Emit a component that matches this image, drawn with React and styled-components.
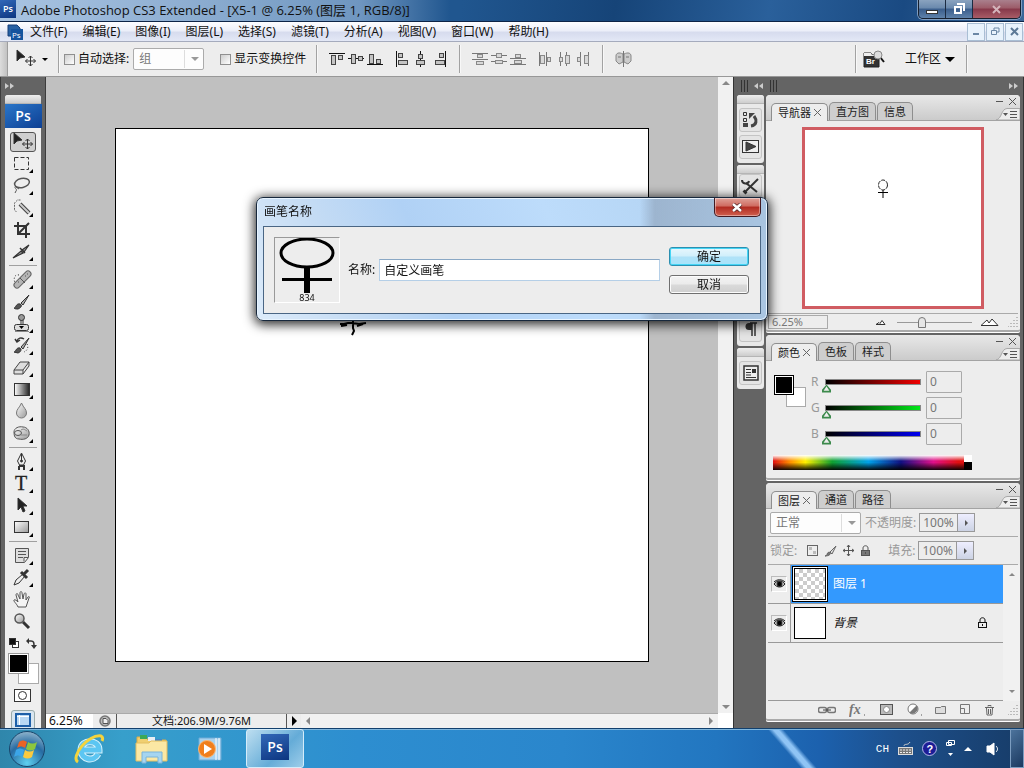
import React from 'react';
import styled, { createGlobalStyle } from 'styled-components';

const GlobalStyle = createGlobalStyle`
  * { box-sizing: border-box; }
  html, body, #root { height: 100%; }
  body {
    margin: 0;
    overflow: hidden;
    font: 12px/16px "Noto Sans", "Noto Sans CJK SC", sans-serif;
    color: #111;
  }
  button, input, select { font: inherit; color: inherit; margin: 0; padding: 0; }
  button { border: 0; background: none; }
  ul { margin: 0; padding: 0; list-style: none; }
  svg { display: block; flex: none; }
`;

/* ---------- shared ---------- */

const Svg = ({ w = 22, h = 22, children }) => (
  <svg width={w} height={h} viewBox={`0 0 ${w} ${h}`} fill="none" stroke="#333">
    {children}
  </svg>
);

// gradients shared by the icons, takes no room on the page
const GradientDefs = styled.svg`
  position: absolute;
  width: 0;
  height: 0;
`;

const Page = styled.div`
  display: flex;
  flex-direction: column;
  height: 100vh;
`;

const Row = styled.div`
  display: flex;
  align-items: center;
  gap: ${p => p.$gap || 0}px;
`;

const Spacer = styled.span`flex: 1;`;

const Separator = styled.span`
  align-self: stretch;
  margin: 3px 0;
  width: 2px;
  border-left: 1px solid #a2a2a2;
  border-right: 1px solid #f8f8f8;
`;

const Dropdown = styled.span`
  display: grid;
  align-items: center;
  width: ${p => p.$w}px;
  height: 22px;
  color: #777;
  border: 1px solid #ababab;
  border-radius: 2px;
  background: #fdfdfd;
  select {
    grid-area: 1 / 1;
    width: 100%;
    height: 20px;
    padding-left: 5px;
    border: 0;
    background: linear-gradient(#ddd, #ddd) right 18px center / 1px 18px no-repeat;
    appearance: none;
  }
  &::after {
    content: "";
    grid-area: 1 / 1;
    justify-self: end;
    margin-right: 4px;
    border: 4px solid transparent;
    border-top-color: #999;
    border-bottom: 0;
    pointer-events: none;
  }
`;

/* ---------- title bar ---------- */

const TitleBar = styled.header`
  display: flex;
  flex: none;
  height: 22px;
  border-bottom: 1px solid #0d2447;
  background:
    linear-gradient(90deg, #a9c4e2 0, #8fafd2 180px, #6f96c0 360px, #6f96c000 450px),
    linear-gradient(100deg, #20568f 45%, #164478 60%, #2a609b 75%, #1a4a82 88%, #3a6798);
`;

const TitleText = styled.h1`
  flex: 1;
  margin: 0;
  padding-left: 5px;
  font-family: "Open Sans", "Noto Sans CJK SC", sans-serif;
  font-size: 13px;
  font-weight: 400;
  line-height: 20px;
  white-space: nowrap;
`;

const PsBadge = styled.span`
  display: flex;
  align-items: center;
  justify-content: center;
  width: ${p => p.$w}px;
  height: ${p => p.$h}px;
  color: #fff;
  font-family: "Open Sans", sans-serif;
  font-size: ${p => p.$size}px;
  font-weight: 600;
  background: linear-gradient(160deg, #3268b8, #0c3580);
`;

const WindowButtons = styled.div`
  display: flex;
  height: 19px;
  margin-right: 3px;
  border: 1px solid #17202f;
  border-top: 0;
  border-radius: 0 0 5px 5px;
  overflow: hidden;
  box-shadow: 0 0 0 1px #7f9dc0;
`;

const WindowButton = styled.button`
  display: flex;
  align-items: center;
  justify-content: center;
  width: ${p => (p.$close ? 47 : 27)}px;
  background: ${p => (p.$close
    ? 'linear-gradient(#a9808d, #9c5b68 45%, #86384a 50%, #a85c66)'
    : 'linear-gradient(#8aa3bf, #6a89ad 45%, #3a5d8b 50%, #5f82aa)')};
  border-right: ${p => (p.$close ? '0' : '1px solid #1b2b42')};
`;

/* ---------- menu bar ---------- */

const MenuBar = styled.nav`
  display: flex;
  flex: none;
  align-items: center;
  height: 20px;
  padding-left: 7px;
  border-bottom: 1px solid #a5abbd;
  background: linear-gradient(#fdfdff, #eceff9 45%, #d7dcee 55%, #e3e8f6);
`;

const MenuList = styled.ul`
  display: flex;
  flex: 1;
  gap: 15px;
  margin-left: 7px;
  button { display: block; height: 18px; white-space: nowrap; }
`;

const MdiButton = styled.button`
  display: flex;
  align-items: center;
  justify-content: center;
  width: 18px;
  height: 18px;
  margin-right: 1px;
  border: 1px solid #a9bed4;
  background: #e8f2fc;
`;

/* ---------- options bar ---------- */

const OptionsBar = styled.section`
  display: flex;
  flex: none;
  align-items: center;
  height: 35px;
  padding-right: 56px;
  border-bottom: 1px solid #989898;
  background: #ededed;
`;

const Grip = styled.span`
  align-self: stretch;
  width: 8px;
  border-right: 1px solid #9d9d9d;
  background: linear-gradient(90deg, #dcdcdc, #c2c2c2);
`;

const MoveTool = styled.button`
  display: flex;
  align-items: center;
  gap: 5px;
  width: 50px;
  padding-left: 7px;
`;

const OptionFields = styled.div`
  display: flex;
  align-items: center;
  gap: 4px;
  margin: 0 16px 0 4px;
`;

const Check = styled.label`
  display: flex;
  align-items: center;
  gap: 3px;
  white-space: nowrap;
  input {
    width: 11px;
    height: 11px;
    appearance: none;
    border: 1px solid #8f8f8f;
    background: linear-gradient(135deg, #cdcdcd, #fff);
  }
`;

const AlignArea = styled.div`
  display: flex;
  align-items: center;
  align-self: stretch;
  gap: 11px;
  margin-left: 10px;
`;

const BridgeButton = styled.button`margin-left: 6px;`;

const WorkspaceMenu = styled.button`
  display: flex;
  align-items: center;
  gap: 4px;
  margin: 0 11px 0 20px;
  white-space: nowrap;
`;

const alignIcons = {
  top: { line: 'M0 2.5h16', boxes: [[2, 4, 4, 9], [9, 4, 4, 4]] },
  middle: { line: 'M0 7.5h16', boxes: [[3, 3, 4, 9], [10, 5, 4, 4]] },
  bottom: { line: 'M0 13.5h16', boxes: [[2, 3, 4, 9], [9, 8, 4, 4]] },
  left: { line: 'M2.5 0v16', boxes: [[4, 2, 4, 4], [4, 9, 9, 4]] },
  center: { line: 'M7.5 0v16', boxes: [[5, 3, 4, 4], [3, 9, 8, 4]] },
  right: { line: 'M13.5 0v16', boxes: [[7, 2, 4, 4], [3, 9, 9, 4]] },
  distTop: { line: 'M0 2.5h16M0 8.5h16', boxes: [[5, 3, 5, 3], [4, 10, 7, 3]] },
  distMiddle: { line: 'M0 4.5h16M0 10.5h16', boxes: [[5, 2, 5, 4], [4, 9, 7, 3]] },
  distBottom: { line: 'M0 7.5h16M0 13.5h16', boxes: [[5, 3, 5, 3], [4, 9, 7, 3]] },
  distLeft: { line: 'M2.5 1v14M9.5 1v14', boxes: [[3, 4, 4, 8], [10, 6, 3, 4]] },
  distCenter: { line: 'M4.5 1v14M10.5 1v14', boxes: [[3, 6, 3, 4], [9, 4, 4, 8]] },
  distRight: { line: 'M5.5 1v14M13.5 1v14', boxes: [[2, 6, 3, 4], [9, 4, 4, 8]] }
};

const AlignIcon = ({ name, dim }) => (
  <Svg w={16} h={16}>
    <path d={alignIcons[name].line} stroke={dim ? '#777' : '#111'} />
    {alignIcons[name].boxes.map(([x, y, w, h]) => (
      <rect key={`${x}-${y}`} x={x + 0.5} y={y + 0.5} width={w} height={h}
        fill={dim ? '#d8d8d8' : '#c4c4c4'} stroke={dim ? '#888' : '#444'} />
    ))}
  </Svg>
);

const AlignGroup = ({ names, dim }) => (
  <Row $gap={3}>
    {names.map(n => <button key={n} aria-label={n}><AlignIcon name={n} dim={dim} /></button>)}
  </Row>
);

/* ---------- workspace ---------- */

const Workspace = styled.main`
  display: flex;
  flex: 1;
  min-height: 0;
  overflow: hidden;
  background: #646464;
`;

const ToolDock = styled.aside`
  flex: none;
  width: 46px;
  padding: 0 4px;
  border-left: 1px solid #3c3c3c;
  border-right: 1px solid #3c3c3c;
  overflow: hidden;
`;

const DockTop = styled.div`
  display: flex;
  align-items: center;
  gap: 6px;
  height: 18px;
`;

const ToolPanel = styled.div`
  display: flex;
  flex-direction: column;
  align-items: center;
  border-radius: 3px 3px 0 0;
  background: #eee;
`;

const PanelGrip = styled.div`
  align-self: stretch;
  height: 9px;
  border-bottom: 1px solid #b5b5b5;
  border-radius: 3px 3px 0 0;
  background: linear-gradient(#eee, #cdcdcd);
`;

const ToolLogo = styled(PsBadge)`
  margin-bottom: 3px;
  background: linear-gradient(150deg, #2a76c9, #0d3f93);
`;

const ToolButton = styled.button`
  display: flex;
  align-items: center;
  width: 26px;
  height: ${p => (p.$active ? 20 : 22)}px;
  margin: ${p => (p.$active ? '1px 0' : '0')};
  padding-left: ${p => (p.$active ? 1 : 2)}px;
  border: ${p => (p.$active ? '1px solid #555' : '0')};
  border-radius: 3px;
  background: ${p => (p.$active ? '#cfcfcf' : 'none')};
`;

const ToolRule = styled.hr`
  width: 28px;
  height: 1px;
  margin: 2px 0 3px;
  border: 0;
  background: #a0a0a0;
`;

const corner = <path d="M21 16v4h-4z" fill="#000" stroke="none" />;

const toolIcons = {
  移动: (
    <>
      <path d="M2 2v11l3-3 5-1z" fill="#222" />
      <path d="M15.500 8v10M10.500 13h10M13.500 10l2-2 2 2M13.500 16l2 2 2-2M12.500 11l-2 2 2 2M18.500 11l2 2-2 2" />
    </>
  ),
  选框: <><rect x="2.500" y="4.500" width="14" height="12" strokeDasharray="4 2" />{corner}</>,
  套索: (
    <>
      <ellipse cx="10" cy="8" rx="7.500" ry="4.500" transform="rotate(-12 10 8)" stroke="#555" strokeWidth="1.500" />
      <path d="M4 11c-3 2 2 3 0 5l-1 2M4 12l3 2" stroke="#555" />{corner}
    </>
  ),
  魔棒: (
    <>
      <path d="M8.500 3h-3l-3 3v7l2 2" stroke="#666" strokeDasharray="2 1" />
      <path d="M8 7l9 9" stroke="#444" strokeWidth="4" /><path d="M8 7l9 9" stroke="#ccc" strokeWidth="2" />{corner}
    </>
  ),
  裁剪: <path d="M6 3v12h12M2 7h12v12M6 15L17 4" strokeWidth="2" />,
  切片: <><path d="M1 17l8-7 2 2zM10 9l7-5-5 7z" fill="#999" strokeWidth="1.200" /><path d="M8 7l5 5" strokeWidth="1.500" />{corner}</>,
  修复: (
    <>
      <path d="M7 6c-4-1-6 3-4 8" strokeDasharray="1 2" />
      <path d="M5 16L16 5" stroke="#666" strokeWidth="7" strokeLinecap="round" />
      <path d="M5 16L16 5" stroke="#b5b5b5" strokeWidth="5" strokeLinecap="round" />
      <path d="M8 9l5 5M6 13h1M13 7h1M15 5h1" stroke="#555" />{corner}
    </>
  ),
  画笔: (
    <>
      <path d="M9 12l8-8-6 10z" fill="#aaa" />
      <path d="M2 17c2 0 2-5 6-4 3 1 1 4-2 5-2 0-3 0-4-1z" fill="#555" />{corner}
    </>
  ),
  图章: (
    <>
      <circle cx="9.500" cy="4.500" r="3" fill="#999" />
      <path d="M9 7v5M11 7v5" />
      <rect x="2.500" y="11.500" width="14" height="6" rx="2" fill="#ddd" />
      <path d="M7 13h5l-2.500 3z" fill="#000" stroke="none" /><path d="M3 18.500h14" stroke="#888" />{corner}
    </>
  ),
  历史记录画笔: (
    <>
      <path d="M9 12l8-9-6 11z" fill="#aaa" />
      <path d="M2 17c2 0 2-5 6-4 2 1 1 4-2 5z" fill="#555" />
      <path d="M12 4C9 2 6 3 5 6M3 4l2 3 3-2" strokeWidth="1.500" />
      <path d="M15 9c2 3 0 7-3 8" strokeDasharray="1 2" />{corner}
    </>
  ),
  橡皮擦: <><path d="M2 13l6-8h9l-6 8zM2 13v4h9v-4M11 17l6-8V5" fill="#ddd" stroke="#444" />{corner}</>,
  渐变: <><rect x="2.500" y="4.500" width="15" height="12" fill="url(#toolFade)" />{corner}</>,
  模糊: <><path d="M9.500 2c2 5 5 6 5 10a5 5 0 0 1-10 0c0-4 3-5 5-10z" fill="url(#greyFade)" stroke="#777" />{corner}</>,
  海绵: (
    <>
      <path d="M2 9c0-4 5-6 9-5 4 0 7 4 6 8-1 4-6 5-10 4-4 0-5-3-5-7z" fill="url(#greyFade)" stroke="#555" />
      <ellipse cx="6" cy="10" rx="3.500" ry="2.500" stroke="#555" /><path d="M9 7c3-2 4 0 6 1M9 12h6" stroke="#888" />{corner}
    </>
  ),
  钢笔: (
    <>
      <path d="M9.500 2l-4 8 2 4h4l2-4zM9.500 3v7" fill="#eee" />
      <circle cx="9.500" cy="10" r="1" fill="#333" /><path d="M7 15h5v4M7 15v4" strokeWidth="2" />{corner}
    </>
  ),
  文字: <><text x="3" y="17" fontFamily="Liberation Serif, serif" fontSize="20" fill="#222" stroke="#222" strokeWidth="0.300">T</text>{corner}</>,
  路径选择: <><path d="M6 3v12l3-3 2 5 2-1-2-5h4z" fill="#222" />{corner}</>,
  矩形: <><rect x="2.500" y="4.500" width="14" height="11" fill="url(#greyFade)" />{corner}</>,
  注释: <><path d="M3.500 3.500h13v9l-4 5h-9zM16 12.500h-4v4M6 6.500h8M6 9.500h8M6 12.500h5" fill="#ddd" stroke="#555" />{corner}</>,
  吸管: (
    <>
      <path d="M2 18l2-5 7-6 2 2-6 7z" fill="#eee" />
      <path d="M9 5l6 6M12 7l4-4" strokeWidth="3" />{corner}
    </>
  ),
  抓手: (
    <path d="M6 18c-1-3-5-6-4-7s3 1 4 2L4 6c0-2 2-2 2 0l2 4V4c0-2 2-2 2 0l1 6 1-5c1-2 2-1 2 0v6l2-3c1-1 2 0 1 1l-3 9z" fill="#f4f4f4" stroke="#555" />
  ),
  缩放: (
    <>
      <path d="M11 11l6 6" strokeWidth="3" />
      <circle cx="7.500" cy="7.500" r="4.500" fill="url(#greyFade)" stroke="#555" strokeWidth="1.500" />
    </>
  )
};

const toolGroups = [
  ['移动', '选框', '套索', '魔棒', '裁剪', '切片'],
  ['修复', '画笔', '图章', '历史记录画笔', '橡皮擦', '渐变', '模糊', '海绵'],
  ['钢笔', '文字', '路径选择', '矩形'],
  ['注释', '吸管', '抓手', '缩放']
];

const MiniRow = styled.div`
  display: flex;
  justify-content: space-between;
  align-items: center;
  width: 28px;
  height: 20px;
`;

const Swatches = styled.div`
  display: grid;
  grid-template-columns: ${p => p.$a}px ${p => p.$b}px ${p => p.$a}px;
  grid-template-rows: ${p => p.$a}px ${p => p.$b}px ${p => p.$a}px;
`;

const Swatch = styled.button`
  grid-area: ${p => (p.$front ? '1 / 1 / 3 / 3' : '2 / 2 / 4 / 4')};
  z-index: ${p => (p.$front ? 1 : 0)};
  border: 1px solid ${p => (p.$front ? p.$ring || '#999' : '#aaa')};
  background: ${p => (p.$front ? '#000' : '#fff')};
  box-shadow: inset 0 0 0 1px #fff;
`;

const MaskButton = styled.button`
  display: flex;
  margin: 5px 0 7px;
`;

const ScreenButton = styled.button`
  display: flex;
  justify-content: center;
  width: 24px;
  height: 20px;
  padding-top: 2px;
  border: 1px solid #9aa;
  border-radius: 3px;
  background: #d9e6f0;
`;

/* ---------- document window ---------- */

const DocumentWindow = styled.section`
  display: grid;
  flex: 1;
  grid-template-columns: 1fr 15px;
  grid-template-rows: 1fr 15px;
  min-width: 0;
  background: #fff;
`;

const Pasteboard = styled.div`
  display: flex;
  align-items: center;
  justify-content: center;
  overflow: hidden;
  background: #c0c0c0;
`;

const Canvas = styled.div`
  position: relative;
  width: 534px;
  height: 534px;
  border: 1px solid #000;
  background: #fff;
`;

const Stroke = styled.div`
  position: absolute;
  left: 42%;
  top: 35%;
`;

const ScrollTrack = styled.div`
  display: flex;
  flex-direction: ${p => (p.$vertical ? 'column' : 'row')};
  align-items: center;
  justify-content: space-between;
  flex: 1;
  padding: ${p => (p.$vertical ? '4px 0' : '0 5px')};
  background: #f1f1f1;
`;

const StatusBar = styled.div`
  display: flex;
  align-items: stretch;
  border-top: 1px solid #aaa;
  background: #ededed;
  line-height: 14px;
`;

const ZoomField = styled.input`
  width: 47px;
  padding-left: 3px;
  border: 0;
  background: #fff;
`;

const DocInfo = styled.div`
  display: flex;
  justify-content: center;
  width: 171px;
  font-size: 11px;
  border-left: 1px solid #555;
  border-right: 1px solid #555;
  white-space: nowrap;
`;

const Arrow = ({ dir, color = '#888', size = 4 }) => {
  const d = {
    up: `M0 ${size}h${size * 2}L${size} 0z`,
    down: `M0 0h${size * 2}L${size} ${size}z`,
    left: `M${size} 0v${size * 2}L0 ${size}z`,
    right: `M0 0v${size * 2}L${size} ${size}z`
  }[dir];
  const tall = dir === 'left' || dir === 'right';
  return (
    <Svg w={tall ? size : size * 2} h={tall ? size * 2 : size}>
      <path d={d} fill={color} stroke="none" />
    </Svg>
  );
};

const StatusButton = styled.button`
  display: flex;
  align-items: center;
  justify-content: center;
  width: ${p => p.$w}px;
`;

/* ---------- collapsed icon dock ---------- */

const IconDock = styled.aside`
  flex: none;
  width: 33px;
  padding: 0 2px 0 3px;
  border-left: 1px solid #333;
`;

const IconDockTop = styled(DockTop)`padding-left: 4px;`;

const IconGroup = styled.div`
  display: flex;
  flex-direction: column;
  align-items: center;
  justify-content: space-between;
  height: ${p => p.$h}px;
  margin-bottom: 2px;
  padding-bottom: 4px;
  border-radius: 3px;
  background: #e9e9e9;
`;

const DockButton = styled.button`
  display: flex;
  align-items: center;
  justify-content: center;
  width: 23px;
  height: 24px;
  border: 1px solid #c4c4c4;
  border-radius: 3px;
  background: #e4e4e4;
`;

const GripLines = () => <Svg w={7} h={12}><path d="M.5 0v12M3.5 0v12M6.5 0v12" stroke="#333" /></Svg>;
const Chevrons = ({ left }) => (
  <Svg w={10} h={6}>
    <path d={left ? 'M4 0v6L0 3zM9 0v6L5 3z' : 'M0 0v6l4-3zM5 0v6l4-3z'} fill="#ccc" stroke="none" />
  </Svg>
);

/* ---------- panels ---------- */

const PanelDock = styled.aside`
  display: flex;
  flex: none;
  flex-direction: column;
  width: 258px;
  padding-right: 3px;
  border-right: 1px solid #333;
`;

const DockBar = styled(DockTop)`
  justify-content: space-between;
  padding: 0 1px 0 4px;
`;

const PanelBox = styled.section`
  display: flex;
  flex-direction: column;
  height: ${p => p.$h}px;
  margin-bottom: 2px;
  border-radius: 4px 4px 2px 2px;
  border-bottom: 1px solid #fff;
  box-shadow: inset 0 -2px 0 #aaa;
  background: #ededed;
`;

const PanelHead = styled.header`
  display: flex;
  align-items: flex-end;
  flex: none;
  height: 26px;
  padding-left: 5px;
  border-bottom: 1px solid #a3a3a3;
  border-radius: 4px 4px 0 0;
  background: linear-gradient(#e8e8e8, #cbcbcb);
`;

const Tab = styled.button`
  display: flex;
  align-items: center;
  gap: 3px;
  height: 18px;
  margin: 0 1px ${p => (p.$active ? -1 : 0)}px 0;
  padding: 0 6px;
  font-size: 11px;
  color: #222;
  white-space: nowrap;
  border: 1px solid #8e8e8e;
  border-bottom: 0;
  border-radius: 5px 5px 0 0;
  background: ${p => (p.$active ? '#ededed' : '#cecece')};
`;

const PanelControls = styled.div`
  display: flex;
  flex-direction: column;
  justify-content: space-between;
  align-items: flex-end;
  align-self: stretch;
  margin-left: auto;
  padding-top: 3px;
`;

const Panel = ({ tabs, height, children }) => (
  <PanelBox $h={height}>
    <PanelHead>
      {tabs.map((t, i) => (
        <Tab key={t} $active={i === 0}>
          {t}
          {i === 0 && <Svg w={7} h={7}><path d="M0 0l7 7M7 0L0 7" stroke="#666" /></Svg>}
        </Tab>
      ))}
      <PanelControls>
        <Row $gap={6}>
          <Svg w={7} h={7}><path d="M0 3.500h7" stroke="#555" /></Svg>
          <Svg w={11} h={7}><path d="M0 0l7 7M7 0L0 7" stroke="#555" /></Svg>
        </Row>
        <Svg w={24} h={12}>
          <path d="M0 12C6 11 5 1 11 .5H24V12z" fill="#ededed" stroke="#a8a8a8" />
          <path d="M7 5h5l-2.500 3z" fill="#555" stroke="none" />
          <path d="M14 3.500h7M14 6.500h7M14 9.500h7" stroke="#555" />
        </Svg>
      </PanelControls>
    </PanelHead>
    {children}
  </PanelBox>
);

const NavPreview = styled.div`
  display: flex;
  justify-content: center;
  align-self: center;
  width: 182px;
  height: 182px;
  margin-top: 6px;
  padding-top: 49px;
  padding-right: 20px;
  border: 3px solid #d05c62;
  background: #fff;
`;

const NavFooter = styled.div`
  display: flex;
  align-items: center;
  height: 17px;
  margin: 4px 2px 0;
  border-top: 1px solid #aaa;
`;

const NavZoom = styled.input`
  width: 60px;
  height: 14px;
  margin-right: 48px;
  padding-left: 3px;
  font-size: 11px;
  color: #777;
  border: 1px solid #aaa;
  background: #ededed;
`;

const NavSlider = styled.input`
  flex: 1;
  min-width: 0;
  height: 14px;
  margin: 0 9px 0 11px;
  appearance: none;
  background: linear-gradient(#999, #999) center / 100% 1px no-repeat;
  &::-webkit-slider-thumb {
    appearance: none;
    width: 8px;
    height: 11px;
    border: 1px solid #777;
    border-radius: 4px 4px 0 0;
    background: #e6e6e6;
  }
`;

const NavEnd = styled.span`margin-left: 9px;`;

const ColorBody = styled.div`
  display: grid;
  grid-template-columns: 37px minmax(0, 1fr);
  padding: 9px 58px 0 8px;
`;

const ColorSwatches = styled.div`padding-top: 5px;`;

const Channel = styled.label`
  display: flex;
  align-items: center;
  height: 26px;
  padding-bottom: 3px;
  color: #999;
  span { width: 14px; }
`;

const ChannelSlider = styled.input`
  flex: 1;
  min-width: 0;
  height: 17px;
  appearance: none;
  background: none;
  &::-webkit-slider-runnable-track {
    height: 6px;
    border: 1px solid #888;
    background: linear-gradient(90deg, #000, ${p => p.$color});
  }
  &::-webkit-slider-thumb {
    appearance: none;
    width: 9px;
    height: 8px;
    margin: 5px 0 0 -4px;
    background: #3c8a4c;
    clip-path: polygon(evenodd, 50% 0, 100% 65%, 100% 100%, 0 100%, 0 65%, 50% 0, 50% 22%, 18% 78%, 82% 78%, 50% 22%);
  }
`;

const ChannelValue = styled.input`
  width: 36px;
  height: 22px;
  margin-left: 5px;
  padding-left: 3px;
  color: #777;
  border: 1px solid #aaa;
  border-radius: 1px;
  background: #ededed;
`;

const Spectrum = styled.div`
  display: flex;
  height: 15px;
  margin: 7px 48px 0 7px;
  &::before {
    content: "";
    flex: 1;
    background:
      linear-gradient(#fff, #fff0 40%, #0000 50%, #000e),
      linear-gradient(90deg, #e01010, #ff9000 9%, #fff000 17%, #10a030 31%, #00a0e8 50%, #101080 67%, #e0108a 84%, #e01010 97%);
  }
  &::after {
    content: "";
    width: 8px;
    background: linear-gradient(#fff 50%, #000 50%);
  }
`;

const LayerOptions = styled.div`
  display: flex;
  align-items: center;
  flex: none;
  height: 28px;
  margin: 0 2px;
  padding-left: 2px;
  color: #999;
  white-space: nowrap;
  border-bottom: 1px solid #aaa;
`;

const LockIcons = styled.div`
  display: flex;
  align-items: center;
  gap: 6px;
  margin-left: 10px;
`;

const Percent = styled.span`
  display: flex;
  width: 56px;
  height: 19px;
  border: 1px solid #999;
  input {
    width: 38px;
    padding-left: 3px;
    color: #777;
    border: 0;
    border-right: 1px solid #999;
    background: #ededed;
  }
  button {
    display: flex;
    align-items: center;
    justify-content: center;
    flex: 1;
    background: linear-gradient(#eef, #ccd3e4);
  }
`;

const LayerLabel = styled.label`
  display: flex;
  align-items: center;
  gap: 3px;
  margin-left: ${p => p.$left}px;
`;

const LayerArea = styled.div`
  display: flex;
  flex: 1;
  min-height: 0;
  margin-left: 2px;
`;

const LayerList = styled.ul`
  flex: 1;
  border-bottom: 1px solid #999;
`;

const Layer = styled.li`
  display: grid;
  grid-template-columns: 22px 38px 1fr 26px;
  align-items: center;
  height: 39px;
  border-bottom: 1px solid #999;
  .name {
    align-self: stretch;
    display: flex;
    align-items: center;
    padding-left: 5px;
    font-style: ${p => (p.$active ? 'normal' : 'italic')};
    color: ${p => (p.$active ? '#fff' : '#111')};
  }
  .name, .thumb, .lock { background: ${p => (p.$active ? '#3399fe' : 'none')}; }
  .lock { align-self: stretch; display: flex; align-items: center; }
`;

const ThumbCell = styled.div`
  display: flex;
  align-items: center;
  justify-content: center;
  align-self: stretch;
  border-left: 1px solid #999;
`;

const Thumb = styled.span`
  width: 32px;
  height: 32px;
  border: 1px solid #000;
  box-shadow: ${p => (p.$active ? '0 0 0 1px #fff, 0 0 0 2px #000' : 'none')};
  background: ${p => (p.$active
    ? 'repeating-conic-gradient(#ccc 0 25%, #fff 0 50%) 0 0 / 8px 8px'
    : '#fff')};
`;

const EyeButton = styled.button`
  display: flex;
  align-items: center;
  justify-content: center;
  width: 16px;
  height: 16px;
  margin-left: 3px;
  border: 1px solid #bbb;
  border-right-color: #fff;
  border-bottom-color: #fff;
`;

const LayerFooter = styled.footer`
  display: flex;
  align-items: center;
  justify-content: space-between;
  flex: none;
  height: 20px;
  padding: 0 2px 3px 52px;
`;

const LayerScroll = styled(ScrollTrack)`
  flex: none;
  width: 17px;
  padding: 8px 0;
`;

const ResizeGrip = () => (
  <Svg w={10} h={10}>
    <path d="M9 0v1M9 3v1M9 6v1M9 9v1M6 3v1M6 6v1M6 9v1M3 6v1M3 9v1M0 9v1" stroke="#888" />
  </Svg>
);

const Lock = ({ fill = 'none', color = '#111' }) => (
  <Svg w={11} h={12}>
    <path d="M3 5V3c0-3 5-3 5 0v2" stroke={color} />
    <rect x="1.500" y="5.500" width="8" height="5" fill={fill} stroke={color} />
    <path d="M5.500 7v2" stroke={color} />
  </Svg>
);

/* ---------- dialog ---------- */

const Dialog = styled.form`
  position: fixed;
  z-index: 5;
  top: 197px;
  left: 50%;
  width: 512px;
  transform: translateX(-50%);
  padding: 0 6px 6px;
  border: 1px solid #17283c;
  border-radius: 7px;
  background:
    linear-gradient(90deg, #fff0 75%, #8798ae88 78%, #9fb4cc66),
    linear-gradient(65deg, #dcebfa, #c5dcf4 18%, #b0d1f5 35%, #bddcfb 60%, #aecfee);
  box-shadow: inset 0 0 0 1px #e8f4ff, 0 2px 11px 2px #000c;
`;

const DialogHead = styled.div`
  display: flex;
  justify-content: space-between;
  height: 28px;
  h2 { margin: 5px 1px; font-size: 12px; font-weight: 400; line-height: 17px; }
`;

const DialogClose = styled.button`
  display: flex;
  align-items: center;
  justify-content: center;
  width: 47px;
  height: 19px;
  border: 1px solid #431a22;
  border-top: 0;
  border-radius: 0 0 5px 5px;
  background: linear-gradient(#dfa198, #cf6b60 45%, #b02a20 50%, #d0604f);
  box-shadow: inset 0 0 0 1px #ffffff66;
`;

const DialogBody = styled.div`
  display: flex;
  align-items: center;
  height: 88px;
  padding: 0 11px 0 10px;
  border: 1px solid #4a6684;
  background: #ededed;
`;

const BrushPreview = styled.figure`
  display: flex;
  flex-direction: column;
  align-items: center;
  width: 66px;
  height: 66px;
  margin: 0 8px 0 0;
  border: 1px solid #999;
  border-right-color: #fff;
  border-bottom-color: #fff;
  figcaption { font-size: 9px; line-height: 9px; }
`;

const NameField = styled.label`
  display: flex;
  align-items: center;
  flex: 1;
  gap: 4px;
  white-space: nowrap;
  input {
    flex: 1;
    min-width: 0;
    height: 22px;
    padding-left: 4px;
    border: 1px solid #b5cfe7;
    border-top-color: #8aa8c5;
    background: #fff;
  }
`;

const DialogButtons = styled.div`
  display: grid;
  gap: 9px;
  margin-left: 9px;
`;

const DialogButton = styled.button`
  width: 80px;
  height: 19px;
  line-height: 17px;
  border: 1px solid ${p => (p.$primary ? '#2c8fb0' : '#707070')};
  border-radius: 3px;
  background: ${p => (p.$primary
    ? 'linear-gradient(#e8f7fd, #d0effb 48%, #b0e2f8 52%, #a8e4fb)'
    : 'linear-gradient(#f3f3f3, #ebebeb 48%, #dadada 52%, #cfcfcf)')};
  box-shadow: inset 0 0 0 1px ${p => (p.$primary ? '#45d5f5' : '#fcfcfc')};
`;

/* ---------- taskbar ---------- */

const Taskbar = styled.footer`
  display: flex;
  align-items: center;
  flex: none;
  height: 40px;
  padding-left: 7px;
  border-top: 1px solid #12406d;
  box-shadow: inset 0 1px 0 #7fb6dd;
  background:
    linear-gradient(49deg, #fff0 42%, #8fc4f5 48%, #8fc4f5 53%, #fff0 59%) 79% 0 / 60px 40px no-repeat,
    linear-gradient(90deg, #2f86ab, #379fcb 12%, #2d8ed0 35%, #2a86cc 55%, #2276c0 70%, #1c61ae 80%, #1d4f8b 88%, #173c68);
`;

const TaskButton = styled.button`
  display: flex;
  align-items: center;
  justify-content: center;
  align-self: stretch;
  width: ${p => p.$w}px;
  border: ${p => (p.$active ? '1px solid #d4ecfa' : '0')};
  border-radius: 3px;
  background: ${p => (p.$active ? 'linear-gradient(135deg, #e0f0f9cc, #7fb8dcaa 60%, #b8dcf0cc)' : 'none')};
`;

const TaskBadge = styled(PsBadge)`margin-bottom: 4px;`;

const Tray = styled.div`
  display: flex;
  align-items: center;
  align-self: stretch;
  gap: 9px;
  margin-left: auto;
  color: #fff;
  font-family: "Liberation Mono", monospace;
  font-size: 11px;
`;

const ShowDesktop = styled.button`
  align-self: stretch;
  width: 14px;
  border: 1px solid #7c9dc0;
  background: linear-gradient(135deg, #4c739c, #1a3960);
`;

const menus = ['文件(F)', '编辑(E)', '图像(I)', '图层(L)', '选择(S)', '滤镜(T)', '分析(A)', '视图(V)', '窗口(W)', '帮助(H)'];

const channels = [
  { name: 'R', color: '#f00000' },
  { name: 'G', color: '#00e818' },
  { name: 'B', color: '#0000f0' }
];

const Tools = () => (
  <ToolDock>
    <DockTop><Chevrons /></DockTop>
    <ToolPanel>
      <PanelGrip />
      <ToolLogo $w={37} $h={24} $size={14}>Ps</ToolLogo>
      {toolGroups.map((group, g) => (
        <React.Fragment key={group[0]}>
          {g > 0 && <ToolRule />}
          {group.map(name => (
            <ToolButton key={name} $active={name === '移动'} aria-label={name}>
              <Svg>{toolIcons[name]}</Svg>
            </ToolButton>
          ))}
        </React.Fragment>
      ))}
      <MiniRow>
        <Svg w={11} h={11}>
          <rect x="3.500" y="3.500" width="6" height="6" fill="#fff" />
          <rect x=".5" y=".5" width="6" height="6" fill="#111" />
        </Svg>
        <Svg w={11} h={11}>
          <path d="M2 3h3c3 0 3 2 3 5" strokeWidth="1.500" /><path d="M3 0v6L0 3zM5 7h6l-3 4z" fill="#333" stroke="none" />
        </Svg>
      </MiniRow>
      <Swatches $a={10} $b={11}>
        <Swatch $front aria-label="前景色" /><Swatch aria-label="背景色" />
      </Swatches>
      <MaskButton aria-label="快速蒙版">
        <Svg w={18} h={14}><rect x=".5" y=".5" width="16" height="12" fill="#fff" /><circle cx="8.500" cy="6.500" r="4" /></Svg>
      </MaskButton>
      <ScreenButton aria-label="屏幕模式">
        <Svg w={16} h={14}><rect x="1" y="1" width="14" height="12" fill="#b8d8f4" stroke="#1d5fa8" strokeWidth="2" /><path d="M4.500 2v10M2 3.500h12" stroke="#fff" /></Svg>
      </ScreenButton>
    </ToolPanel>
  </ToolDock>
);

const PercentField = ({ left, children }) => (
  <LayerLabel $left={left}>
    {children}
    <Percent>
      <input defaultValue="100%" />
      <button aria-label="更多"><Arrow dir="right" color="#555" size={3} /></button>
    </Percent>
  </LayerLabel>
);

const LayersPanel = () => (
  <Panel tabs={['图层', '通道', '路径']} height={239}>
    <LayerOptions>
      <Dropdown $w={91}><select aria-label="混合模式"><option>正常</option></select></Dropdown>
      <PercentField left={4}>不透明度:</PercentField>
    </LayerOptions>
    <LayerOptions>
      锁定:
      <LockIcons>
        <Svg w={12} h={12}><rect x=".5" y=".5" width="10" height="10" fill="#eee" stroke="#666" /><path d="M2 2h3v3H2zM6 6h3v3H6z" fill="#bbb" stroke="none" /></Svg>
        <Svg w={12} h={12}><path d="M5 7l6-6-4 8z" fill="#ddd" stroke="#666" /><path d="M0 11c3 0 1-3 4-4 3 1 1 4-4 4z" fill="#777" stroke="#666" /></Svg>
        <Svg w={11} h={12}><path d="M5.500 0v11M0 5.500h11M4 2l1.500-2L7 2M4 9l1.500 2L7 9M2 4L0 5.500 2 7M9 4l2 1.500L9 7" stroke="#555" /></Svg>
        <Lock fill="#777" color="#555" />
      </LockIcons>
      <PercentField left={17}>填充:</PercentField>
    </LayerOptions>
    <LayerArea>
      <LayerList>
        {['图层 1', '背景'].map((name, i) => (
          <Layer key={name} $active={i === 0}>
            <EyeButton aria-label="可见">
              <Svg w={13} h={10}>
                <path d="M1 5c3-4 8-4 11 0-3 4-8 4-11 0zM1 3c3-3 8-3 11 0" fill="#bbb" stroke="#222" />
                <circle cx="6.500" cy="5" r="2.500" fill="#000" />
              </Svg>
            </EyeButton>
            <ThumbCell className="thumb"><Thumb $active={i === 0} /></ThumbCell>
            <span className="name">{name}</span>
            <span className="lock">{i === 1 && <Lock />}</span>
          </Layer>
        ))}
      </LayerList>
      <LayerScroll $vertical><Arrow dir="up" size={3} /><Arrow dir="down" size={3} /></LayerScroll>
    </LayerArea>
    <LayerFooter>
      <Svg w={18} h={8}><rect x=".5" y="1.500" width="8" height="5" rx="2" stroke="#777" strokeWidth="1.500" /><rect x="9.500" y="1.500" width="8" height="5" rx="2" stroke="#777" strokeWidth="1.500" /><path d="M5 4h8" stroke="#444" /></Svg>
      <Svg w={18} h={14}><text x="0" y="11" fontFamily="Liberation Serif, serif" fontStyle="italic" fontWeight="700" fontSize="14" fill="#777" stroke="none">fx</text><path d="M15 12h1" stroke="#555" /></Svg>
      <Svg w={14} h={11}><rect x=".5" y=".5" width="12" height="10" fill="#bbb" stroke="#555" /><circle cx="6.500" cy="5.500" r="3" fill="#fff" stroke="#888" /></Svg>
      <Svg w={16} h={13}><circle cx="6" cy="6" r="5" fill="#fff" stroke="#777" /><path d="M9.500 2.500a5 5 0 0 1-7 7z" fill="#777" stroke="none" /><path d="M14 12h1" stroke="#555" /></Svg>
      <Svg w={12} h={10}><path d="M.5 2.500h5l1-1h4v7H.5z" fill="#ddd" stroke="#777" /></Svg>
      <Svg w={12} h={11}><path d="M.5.5h9v9h-9zM.5 4.500h4v5" fill="#eee" stroke="#777" /></Svg>
      <Svg w={10} h={12}><path d="M0 3.500h9M3 2.500v-1h3v1M1.500 4l.5 7h5l.5-7M3.500 5v5M5.500 5v5" stroke="#666" /></Svg>
      <ResizeGrip />
    </LayerFooter>
  </Panel>
);

const BrushDialog = () => (
  <Dialog role="dialog" aria-label="画笔名称" onSubmit={e => e.preventDefault()}>
    <DialogHead>
      <h2>画笔名称</h2>
      <DialogClose type="button" aria-label="关闭">
        <Svg w={11} h={9}><path d="M1 1l8 7M9 1L1 8" stroke="#502020" strokeWidth="4" /><path d="M1 1l8 7M9 1L1 8" stroke="#fff" strokeWidth="2.500" /></Svg>
      </DialogClose>
    </DialogHead>
    <DialogBody>
      <BrushPreview>
        <Svg w={62} h={55}>
          <ellipse cx="31" cy="15" rx="26" ry="14" stroke="#000" strokeWidth="3" />
          <path d="M31 29v26" stroke="#000" strokeWidth="6" /><path d="M6 41.500h50" stroke="#000" strokeWidth="3" />
        </Svg>
        <figcaption>834</figcaption>
      </BrushPreview>
      <NameField>名称:<input defaultValue="自定义画笔" /></NameField>
      <DialogButtons>
        <DialogButton $primary>确定</DialogButton>
        <DialogButton type="button">取消</DialogButton>
      </DialogButtons>
    </DialogBody>
  </Dialog>
);

const SystemBar = () => (
  <Taskbar>
    <TaskButton $w={40} aria-label="开始">
      <Svg w={38} h={38}>
        <circle cx="19" cy="19" r="17.500" fill="url(#orb)" stroke="#18456b" />
        <path d="M11 12c3-2 5-2 8 0l-2 6c-3-2-5-2-8 0z" fill="#ea6425" stroke="none" />
        <path d="M20 12c3 2 6 2 9 0l-2 7c-3 2-6 2-9 0z" fill="#8cc63f" stroke="none" />
        <path d="M8 20c3-2 5-2 8 0l-2 7c-3-2-5-2-8 0z" fill="#3ca5e8" stroke="none" />
        <path d="M17 20c3 2 6 2 9 0l-2 7c-3 2-6 2-9 0z" fill="#fbca3e" stroke="none" />
      </Svg>
    </TaskButton>
    <TaskButton $w={84} aria-label="Internet Explorer">
      <Svg w={32} h={32}>
        <path d="M25 21c-4 8-17 6-17-4 0-11 18-11 18 0H9" stroke="#d4f1fc" strokeWidth="7" />
        <path d="M25 21c-4 8-17 6-17-4 0-11 18-11 18 0H9" stroke="#5cc6f2" strokeWidth="5" />
        <path d="M5 29C-3 24 15 1 28 3c2 1 2 3 1 5" stroke="#f4d43c" strokeWidth="3" />
      </Svg>
    </TaskButton>
    <TaskButton $w={42} aria-label="资源管理器">
      <Svg w={34} h={30}>
        <path d="M2 3h9l2 3h18v19H2z" fill="#f0cf70" stroke="#d8ac48" />
        <path d="M5 1h7v4H5z" fill="#3da858" stroke="none" /><path d="M13 3h7v4h-7z" fill="#e8eef4" stroke="none" /><path d="M20 5h7v3h-7z" fill="#4385c8" stroke="none" />
        <path d="M1 9h13l2-2h16v20H1z" fill="#fbe8a4" stroke="#e3be60" />
        <path d="M7 29V18h20v11h-4v-6H11v6z" fill="#a5d5f0" stroke="#7ab4da" />
      </Svg>
    </TaskButton>
    <TaskButton $w={73} aria-label="媒体播放器">
      <Svg w={24} h={26}>
        <path d="M1 2h22v22H1z" fill="#a8d2ee" stroke="#6fabd6" /><path d="M18 2v22M21 2v22" stroke="#fff" />
        <circle cx="9" cy="13" r="8.500" fill="#f07f1c" stroke="#f8b878" /><path d="M6 8v10l8-5z" fill="#fff" stroke="none" />
      </Svg>
    </TaskButton>
    <TaskButton $w={58} $active aria-label="Photoshop"><TaskBadge $w={28} $h={26} $size={14}>Ps</TaskBadge></TaskButton>
    <Tray>
      <span>CH</span>
      <Svg w={15} h={14}><path d="M6 4c0-3 4 0 6-4" stroke="#ccc" /><rect x=".5" y="5.500" width="14" height="7" fill="#777" stroke="#ddd" /><path d="M2 8h11M2 10.500h11" stroke="#eee" strokeDasharray="2 1" /></Svg>
      <Svg w={15} h={15}><circle cx="7.500" cy="7.500" r="7" fill="#1c1c96" stroke="#b4b8e8" /><text x="4.500" y="12" fontFamily="Liberation Sans, sans-serif" fontWeight="700" fontSize="11" fill="#fff" stroke="none">?</text></Svg>
      <Svg w={9} h={18}><path d="M2.500.5h6v4h-6zM.5 2.500h5v3h-5z" stroke="#fff" /><path d="M2 13h5l-2.500 3z" fill="#fff" stroke="none" /></Svg>
      <Arrow dir="up" color="#fff" />
      <Svg w={20} h={14}><path d="M6 4h3l4-3v12l-4-3H6z" fill="#fff" stroke="#fff" /><path d="M15 4c2 2 2 4 0 6" stroke="#fff" /></Svg>
      <ShowDesktop aria-label="显示桌面" />
    </Tray>
  </Taskbar>
);

export default function App() {
  return (
    <Page>
      <GlobalStyle />
      <GradientDefs>
        <defs>
          <linearGradient id="toolFade"><stop stopColor="#fff" /><stop offset="1" stopColor="#222" /></linearGradient>
          <linearGradient id="greyFade" x2="1" y2="1"><stop stopColor="#fff" /><stop offset="1" stopColor="#999" /></linearGradient>
          <radialGradient id="orb" cy="0.900" r="0.900"><stop stopColor="#5fd0f0" /><stop offset="0.600" stopColor="#276ba2" /><stop offset="1" stopColor="#8fb4cc" /></radialGradient>
        </defs>
      </GradientDefs>

      <TitleBar>
        <PsBadge $w={16} $h={18} $size={9}>Ps</PsBadge>
        <TitleText>Adobe Photoshop CS3 Extended - [X5-1 @ 6.25% (图层 1, RGB/8)]</TitleText>
        <WindowButtons>
          <WindowButton aria-label="最小化"><Svg w={12} h={12}><rect x=".5" y="7.500" width="11" height="3" fill="#fff" /></Svg></WindowButton>
          <WindowButton aria-label="还原"><Svg w={12} h={12}><path d="M4 1h7v7M2 4h6v6H2z" stroke="#fff" strokeWidth="2" /></Svg></WindowButton>
          <WindowButton $close aria-label="关闭"><Svg w={10} h={9}><path d="M1 1l7 7M8 1L1 8" stroke="#d4b4bb" strokeWidth="2" /></Svg></WindowButton>
        </WindowButtons>
      </TitleBar>

      <MenuBar>
        <Svg w={16} h={16}>
          <path d="M1 1h9l3 3v8H1z" fill="#2761a4" stroke="#163f78" />
          <rect x="4" y="5" width="12" height="11" fill="#15549e" stroke="none" />
          <text x="5" y="14" fontFamily="Open Sans, sans-serif" fontSize="8" fill="#fff" stroke="none">Ps</text>
        </Svg>
        <MenuList>{menus.map(m => <li key={m}><button>{m}</button></li>)}</MenuList>
        <MdiButton aria-label="最小化"><Svg w={9} h={9}><path d="M1 7h6" stroke="#6b87a5" strokeWidth="2" /></Svg></MdiButton>
        <MdiButton aria-label="还原"><Svg w={9} h={9}><path d="M3 3V1h5v4H6M.5 3.500h5v4h-5z" stroke="#6b87a5" /></Svg></MdiButton>
        <MdiButton aria-label="关闭"><Svg w={9} h={9}><path d="M1 1l7 7M8 1L1 8" stroke="#5c7997" strokeWidth="2" /></Svg></MdiButton>
      </MenuBar>

      <OptionsBar>
        <Grip />
        <MoveTool aria-label="移动工具">
          <Svg>{toolIcons.移动}</Svg>
          <Arrow dir="down" color="#000" size={3} />
        </MoveTool>
        <Separator />
        <OptionFields>
          <Check><input type="checkbox" />自动选择:</Check>
          <Dropdown $w={71}><select aria-label="选择对象"><option>组</option></select></Dropdown>
        </OptionFields>
        <Check><input type="checkbox" />显示变换控件</Check>
        <AlignArea>
          <Separator />
          <AlignGroup names={['top', 'middle', 'bottom']} />
          <AlignGroup names={['left', 'center', 'right']} />
          <Separator />
          <AlignGroup names={['distTop', 'distMiddle', 'distBottom']} dim />
          <AlignGroup names={['distLeft', 'distCenter', 'distRight']} dim />
          <Separator />
          <button aria-label="自动对齐">
            <Svg w={17} h={16}>
              <path d="M8 3c-4-2-7-1-7 2v5l3 3 4-2zM9 3c4-2 7-1 7 2v5l-3 3-4-2z" fill="#ccc" stroke="#888" />
              <path d="M8.500 0v16M3 6h3M11 6h3" stroke="#777" />
            </Svg>
          </button>
        </AlignArea>
        <Spacer />
        <Separator />
        <BridgeButton aria-label="Bridge">
          <Svg w={22} h={18}>
            <path d="M1 3h7l1 2h7v12H1z" fill="#333" stroke="#222" />
            <path d="M1 3h7l1 2h6v1H1z" fill="#eee" stroke="none" />
            <text x="3" y="14" fontFamily="Liberation Sans, sans-serif" fontWeight="700" fontSize="8" fill="#fff" stroke="none">Br</text>
            <path d="M17 7l4 5" stroke="#111" strokeWidth="2" /><circle cx="15" cy="5" r="4" fill="#ddd" stroke="#888" />
          </Svg>
        </BridgeButton>
        <WorkspaceMenu>工作区<Arrow dir="down" color="#000" size={5} /></WorkspaceMenu>
        <Separator />
      </OptionsBar>

      <Workspace>
        <Tools />
        <DocumentWindow>
          <Pasteboard>
            <Canvas>
              <Stroke>
                <Svg w={28} h={24}><path d="M1 9h4l4-1h4l7 1 7-1M2 11l6-1M18 11l6-2M14 0v13l1 3-2 4" stroke="#000" strokeWidth="2" /></Svg>
              </Stroke>
            </Canvas>
          </Pasteboard>
          <ScrollTrack $vertical><Arrow dir="up" /><Arrow dir="down" /></ScrollTrack>
          <StatusBar>
            <ZoomField aria-label="缩放" defaultValue="6.25%" />
            <StatusButton $w={23} aria-label="版本">
              <Svg w={12} h={12}><circle cx="6" cy="6" r="5" fill="#bbb" stroke="#777" strokeWidth="1.500" /><path d="M4 3.500h3l2 2v3H4z" fill="#eee" stroke="#555" /></Svg>
            </StatusButton>
            <DocInfo>文档:206.9M/9.76M</DocInfo>
            <StatusButton $w={14} aria-label="状态"><Arrow dir="right" color="#000" size={5} /></StatusButton>
            <ScrollTrack><Arrow dir="left" /><Arrow dir="right" /></ScrollTrack>
          </StatusBar>
        </DocumentWindow>
        <IconDock>
          <IconDockTop><GripLines /><Chevrons left /></IconDockTop>
          <IconGroup $h={68}>
            <PanelGrip />
            <DockButton aria-label="历史记录">
              <Svg w={17} h={17}><path d="M1.500 1.500h3v3h-3zM1.500 7.500h3v3h-3z" /><path d="M1 12h5v4H1z" fill="#444" stroke="none" /><path d="M9 15c6-1 6-6 3-10" stroke="#444" strokeWidth="3" /><path d="M7 2h6L7 8z" fill="#444" stroke="none" /></Svg>
            </DockButton>
            <DockButton aria-label="动作">
              <Svg w={17} h={14}><rect x=".5" y=".5" width="16" height="12" fill="#eee" /><path d="M4 2v9l10-4.500z" fill="#444" /></Svg>
            </DockButton>
          </IconGroup>
          <IconGroup $h={181}>
            <PanelGrip />
            <DockButton aria-label="工具预设">
              <Svg w={19} h={18}><path d="M5 6l11 9" strokeWidth="2" /><path d="M17 2L4 15" strokeWidth="2" /><path d="M5 14l-2 2" strokeWidth="4" /><path d="M1 3c0 4 6 5 7 1" strokeWidth="2" /></Svg>
            </DockButton>
            <Spacer />
            <DockButton aria-label="段落">
              <Svg w={14} h={16}><path d="M8 1v13M11 1v13M6 1h7" strokeWidth="1.500" /><path d="M8 1H5a3.500 3.500 0 0 0 0 7h3z" fill="#333" stroke="none" /></Svg>
            </DockButton>
          </IconGroup>
          <IconGroup $h={41}>
            <PanelGrip />
            <DockButton aria-label="图层复合">
              <Svg w={16} h={17}><rect x="1" y="1" width="14" height="14" fill="#eee" strokeWidth="1.500" /><path d="M9 4h4v4H9z" fill="#333" stroke="none" /><path d="M3 4.500h5M3 7.500h5M3 10h5M3 12.500h10" /></Svg>
            </DockButton>
          </IconGroup>
        </IconDock>
        <PanelDock>
          <DockBar><GripLines /><Chevrons /></DockBar>
          <Panel tabs={['导航器', '直方图', '信息']} height={238}>
            <NavPreview>
              <Svg w={12} h={20}><ellipse cx="6" cy="6" rx="4.500" ry="5" stroke="#222" strokeDasharray="4 1" /><path d="M6 11v8M1 13.500h10" stroke="#000" /></Svg>
            </NavPreview>
            <NavFooter>
              <NavZoom aria-label="导航器缩放" defaultValue="6.25%" />
              <Svg w={10} h={6}><path d="M0 5.500h9L6 1.500l-2 3-1-1z" fill="#fff" /></Svg>
              <NavSlider type="range" aria-label="缩放滑块" defaultValue={31} />
              <Svg w={18} h={8}><path d="M0 7.500h17L11 1 8 5 6 2z" fill="#fff" /></Svg>
              <NavEnd><ResizeGrip /></NavEnd>
            </NavFooter>
          </Panel>
          <Panel tabs={['颜色', '色板', '样式']} height={146}>
            <ColorBody>
              <ColorSwatches>
                <Swatches $a={12} $b={8}>
                  <Swatch $front $ring="#000" aria-label="前景色" /><Swatch aria-label="背景色" />
                </Swatches>
              </ColorSwatches>
              <div>
                {channels.map(c => (
                  <Channel key={c.name}>
                    <span>{c.name}</span>
                    <ChannelSlider type="range" $color={c.color} defaultValue={0} />
                    <ChannelValue aria-label={c.name} defaultValue="0" />
                  </Channel>
                ))}
              </div>
            </ColorBody>
            <Spectrum />
          </Panel>
          <LayersPanel />
        </PanelDock>
      </Workspace>

      <SystemBar />
      <BrushDialog />
    </Page>
  );
}
